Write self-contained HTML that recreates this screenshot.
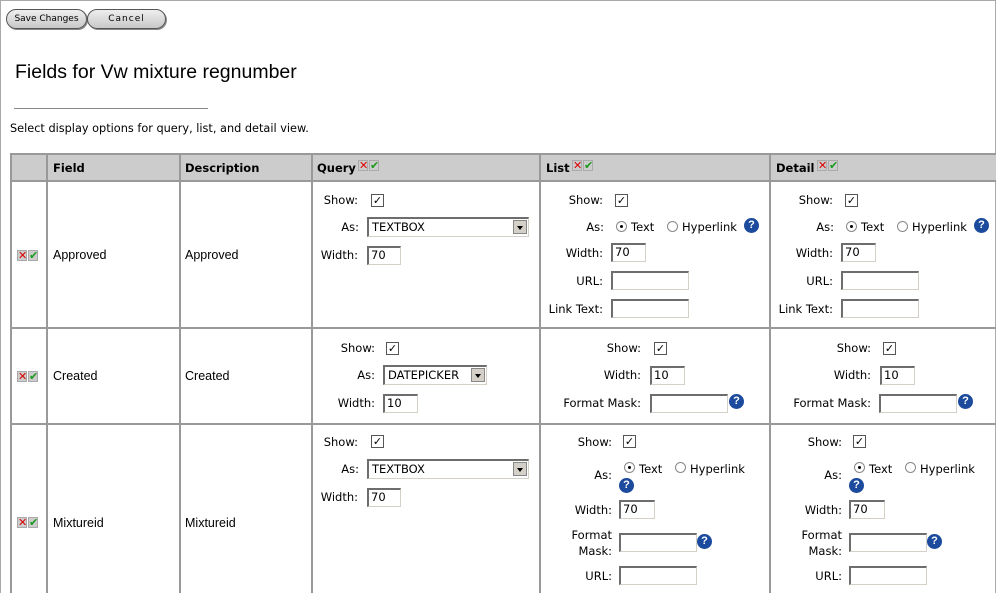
<!DOCTYPE html>
<html><head><style>
body{margin:0;width:996px;height:593px;overflow:hidden;background:#fff;position:relative;font-family:"DejaVu Sans","Liberation Sans",sans-serif;font-size:11.5px;color:#000}
div{position:absolute}
.l{white-space:nowrap;line-height:14px}
.f{font-family:"Liberation Sans",sans-serif;font-size:12.5px}
.hl{background:#999;height:2px}
.vl{background:#999;width:2px}
.tb{background:#fff;border-top:2px solid #6d6d6d;border-left:2px solid #6d6d6d;border-right:1px solid #d4d0c8;border-bottom:1px solid #d4d0c8;box-sizing:border-box;height:19px;line-height:15px;padding-left:2px;font-size:11.5px}
.sel{background:#fff;border-top:2px solid #6d6d6d;border-left:2px solid #6d6d6d;border-right:1px solid #d4d0c8;border-bottom:1px solid #d4d0c8;box-sizing:border-box;height:20px;line-height:16px;padding-left:3px}
.sel i{position:absolute;right:1px;top:1px;width:14px;height:14px;background:#d4d0c8;border:1px solid #888;box-sizing:border-box}
.sel i:after{content:"";position:absolute;left:3px;top:5px;border-left:3px solid transparent;border-right:3px solid transparent;border-top:4px solid #000}
.cb{width:13px;height:13px;border:1px solid #555;box-sizing:border-box;background:#fff;font-size:11px;line-height:11px;text-align:center;font-weight:bold;font-family:"DejaVu Sans",sans-serif}
.rd{width:11px;height:11px;border-radius:50%;border:1px solid #888;box-sizing:border-box;background:#fff}
.rd.on:after{content:"";position:absolute;left:3px;top:3px;width:3px;height:3px;background:#000;border-radius:50%}
.hp{width:15px;height:15px;border-radius:50%;background:#1c4a9c;color:#fff;font-weight:bold;font-size:11px;line-height:15px;text-align:center;font-family:"Liberation Sans",sans-serif}
.ic{width:21px;height:11px}
.ic b,.ic s{position:absolute;top:0;width:10px;height:11px;background:#ccc;border:1px solid #aaa;box-sizing:border-box;font-size:11px;line-height:10px;text-align:center;font-weight:bold;text-decoration:none}
.ic b{left:0;color:#d00}.ic s{left:11px;color:#1a9a1a}
.btn{height:20px;border:1px solid #555;border-radius:10px;background:linear-gradient(#eee,#c8c8c8);box-sizing:border-box;font-size:9px;line-height:18px;text-align:center;box-shadow:1px 1px 0 #888}
.h{font-weight:bold;line-height:14px}
</style></head><body>
<div style="left:0;top:0;width:1px;height:593px;background:#aaa"></div>
<div style="left:0;top:0;width:996px;height:1px;background:#aaa"></div>
<div style="right:0;top:0;width:1px;height:593px;background:#aaa"></div>

<div class="btn" style="left:6px;top:9px;width:81px">Save Changes</div>
<div class="btn" style="left:87px;top:9px;width:79px;letter-spacing:1px">Cancel</div>
<div class="l" style="left:15px;top:61px;font:19.5px 'Liberation Sans',sans-serif;line-height:22px">Fields for Vw mixture regnumber</div>
<div style="left:14px;top:108px;width:194px;height:1px;background:#888"></div>
<div class="l" style="left:10px;top:122px;font-size:11.3px">Select display options for query, list, and detail view.</div>

<div style="left:10px;top:154px;width:986px;height:27px;background:#ccc"></div>
<div class="hl" style="left:10px;top:153px;width:986px"></div>
<div class="hl" style="left:10px;top:180px;width:986px"></div>
<div class="hl" style="left:10px;top:327px;width:986px"></div>
<div class="hl" style="left:10px;top:423px;width:986px"></div>
<div class="vl" style="left:10px;top:153px;height:440px"></div>
<div class="vl" style="left:46px;top:153px;height:440px"></div>
<div class="vl" style="left:179px;top:153px;height:440px"></div>
<div class="vl" style="left:311px;top:153px;height:440px"></div>
<div class="vl" style="left:539px;top:153px;height:440px"></div>
<div class="vl" style="left:769px;top:153px;height:440px"></div>

<div class="h" style="left:53px;top:161px">Field</div>
<div class="h" style="left:185px;top:161px">Description</div>
<div class="h" style="left:317px;top:161px">Query</div>
<div class="ic" style="left:358px;top:160px"><b>✕</b><s>✔</s></div>
<div class="h" style="left:546px;top:161px">List</div>
<div class="ic" style="left:572px;top:160px"><b>✕</b><s>✔</s></div>
<div class="h" style="left:776px;top:161px">Detail</div>
<div class="ic" style="left:817px;top:160px"><b>✕</b><s>✔</s></div>

<div class="ic" style="left:17px;top:250px"><b>✕</b><s>✔</s></div>
<div class="l f" style="left:53px;top:248px">Approved</div>
<div class="l f" style="left:185px;top:248px">Approved</div>
<div class="l" style="right:638px;top:193px">Show:</div>
<div class="cb" style="left:371px;top:194px">✓</div>
<div class="l" style="right:637px;top:220px">As:</div>
<div class="sel" style="left:367px;top:217px;width:162px">TEXTBOX<i></i></div>
<div class="l" style="right:638px;top:248px">Width:</div>
<div class="tb" style="left:367px;top:246px;width:34px">70</div>

<div class="l" style="right:393px;top:193px">Show:</div>
<div class="cb" style="left:615px;top:194px">✓</div>
<div class="l" style="right:392px;top:220px">As:</div>
<div class="rd on" style="left:616px;top:221px"></div>
<div class="l" style="left:631px;top:220px">Text</div>
<div class="rd" style="left:667px;top:221px"></div>
<div class="l" style="left:682px;top:220px">Hyperlink</div>
<div class="hp" style="left:744px;top:218px">?</div>
<div class="l" style="right:393px;top:246px">Width:</div>
<div class="tb" style="left:611px;top:243px;width:35px">70</div>
<div class="l" style="right:393px;top:274px">URL:</div>
<div class="tb" style="left:611px;top:271px;width:78px"></div>
<div class="l" style="right:393px;top:302px">Link Text:</div>
<div class="tb" style="left:611px;top:299px;width:78px"></div>

<div class="l" style="right:163px;top:193px">Show:</div>
<div class="cb" style="left:845px;top:194px">✓</div>
<div class="l" style="right:162px;top:220px">As:</div>
<div class="rd on" style="left:846px;top:221px"></div>
<div class="l" style="left:861px;top:220px">Text</div>
<div class="rd" style="left:897px;top:221px"></div>
<div class="l" style="left:912px;top:220px">Hyperlink</div>
<div class="hp" style="left:974px;top:218px">?</div>
<div class="l" style="right:163px;top:246px">Width:</div>
<div class="tb" style="left:841px;top:243px;width:35px">70</div>
<div class="l" style="right:163px;top:274px">URL:</div>
<div class="tb" style="left:841px;top:271px;width:78px"></div>
<div class="l" style="right:163px;top:302px">Link Text:</div>
<div class="tb" style="left:841px;top:299px;width:78px"></div>

<div class="ic" style="left:17px;top:371px"><b>✕</b><s>✔</s></div>
<div class="l f" style="left:53px;top:369px">Created</div>
<div class="l f" style="left:185px;top:369px">Created</div>
<div class="l" style="right:621px;top:341px">Show:</div>
<div class="cb" style="left:386px;top:342px">✓</div>
<div class="l" style="right:621px;top:368px">As:</div>
<div class="sel" style="left:383px;top:365px;width:104px">DATEPICKER<i></i></div>
<div class="l" style="right:621px;top:396px">Width:</div>
<div class="tb" style="left:383px;top:394px;width:35px">10</div>

<div class="l" style="right:355px;top:341px">Show:</div>
<div class="cb" style="left:654px;top:342px">✓</div>
<div class="l" style="right:355px;top:368px">Width:</div>
<div class="tb" style="left:650px;top:366px;width:35px">10</div>
<div class="l" style="right:355px;top:396px">Format Mask:</div>
<div class="tb" style="left:650px;top:394px;width:78px"></div>
<div class="hp" style="left:729px;top:394px">?</div>

<div class="l" style="right:125px;top:341px">Show:</div>
<div class="cb" style="left:883px;top:342px">✓</div>
<div class="l" style="right:125px;top:368px">Width:</div>
<div class="tb" style="left:880px;top:366px;width:35px">10</div>
<div class="l" style="right:125px;top:396px">Format Mask:</div>
<div class="tb" style="left:879px;top:394px;width:78px"></div>
<div class="hp" style="left:958px;top:394px">?</div>

<div class="ic" style="left:17px;top:517px"><b>✕</b><s>✔</s></div>
<div class="l f" style="left:53px;top:516px">Mixtureid</div>
<div class="l f" style="left:185px;top:516px">Mixtureid</div>
<div class="l" style="right:638px;top:435px">Show:</div>
<div class="cb" style="left:371px;top:435px">✓</div>
<div class="l" style="right:637px;top:462px">As:</div>
<div class="sel" style="left:367px;top:459px;width:162px">TEXTBOX<i></i></div>
<div class="l" style="right:638px;top:490px">Width:</div>
<div class="tb" style="left:367px;top:488px;width:34px">70</div>

<div class="l" style="right:384px;top:435px">Show:</div>
<div class="cb" style="left:623px;top:435px">✓</div>
<div class="l" style="right:384px;top:468px">As:</div>
<div class="rd on" style="left:624px;top:462px"></div>
<div class="l" style="left:639px;top:462px">Text</div>
<div class="rd" style="left:675px;top:462px"></div>
<div class="l" style="left:690px;top:462px">Hyperlink</div>
<div class="hp" style="left:619px;top:478px">?</div>
<div class="l" style="right:384px;top:503px">Width:</div>
<div class="tb" style="left:619px;top:500px;width:36px">70</div>
<div class="l" style="right:384px;top:528px">Format</div>
<div class="l" style="right:384px;top:544px">Mask:</div>
<div class="tb" style="left:619px;top:533px;width:78px"></div>
<div class="hp" style="left:697px;top:534px">?</div>
<div class="l" style="right:384px;top:569px">URL:</div>
<div class="tb" style="left:619px;top:566px;width:78px"></div>

<div class="l" style="right:154px;top:435px">Show:</div>
<div class="cb" style="left:853px;top:435px">✓</div>
<div class="l" style="right:154px;top:468px">As:</div>
<div class="rd on" style="left:854px;top:462px"></div>
<div class="l" style="left:869px;top:462px">Text</div>
<div class="rd" style="left:905px;top:462px"></div>
<div class="l" style="left:920px;top:462px">Hyperlink</div>
<div class="hp" style="left:849px;top:478px">?</div>
<div class="l" style="right:154px;top:503px">Width:</div>
<div class="tb" style="left:849px;top:500px;width:36px">70</div>
<div class="l" style="right:154px;top:528px">Format</div>
<div class="l" style="right:154px;top:544px">Mask:</div>
<div class="tb" style="left:849px;top:533px;width:78px"></div>
<div class="hp" style="left:927px;top:534px">?</div>
<div class="l" style="right:154px;top:569px">URL:</div>
<div class="tb" style="left:849px;top:566px;width:78px"></div>
</body></html>
